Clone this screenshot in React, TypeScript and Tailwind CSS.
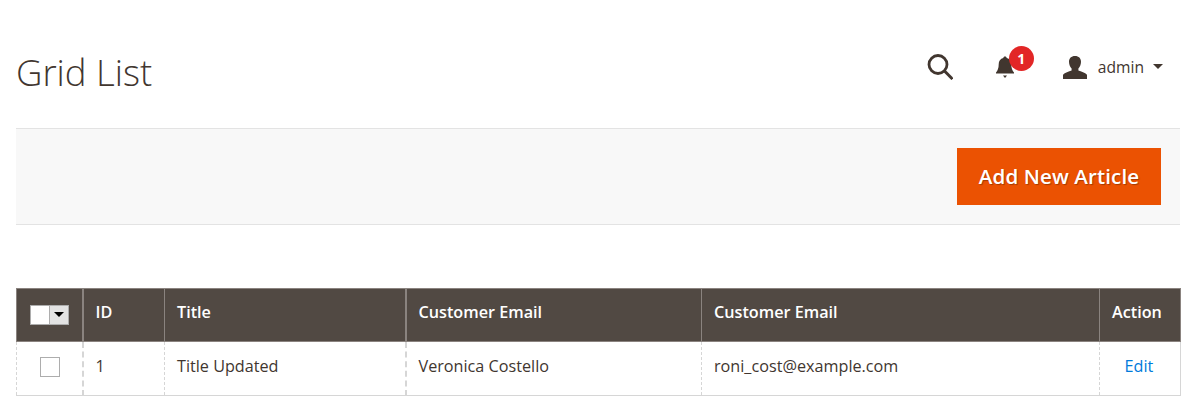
const font = { fontFamily: '"Open Sans", sans-serif' };

function SearchIcon() {
  return (
    <svg width="26" height="26" viewBox="0 0 26 26" fill="none" stroke="#41362f">
      <circle cx="11" cy="10.500" r="9" strokeWidth="2.800" />
      <path d="M17.500 17 L25.500 25" strokeWidth="3" />
    </svg>
  );
}

function BellIcon() {
  return (
    <svg width="20" height="24" viewBox="0 0 20 24" fill="#41362f">
      <path d="M10 1.500c1 0 1.700.7 1.700 1.600 3 .7 4.600 3 4.600 6.200 0 4 1 6.200 2.700 8.200v1H1v-1c1.700-2 2.700-4.200 2.700-8.200 0-3.200 1.600-5.500 4.600-6.200C8.300 2.200 9 1.500 10 1.500z" />
      <path d="M8 20.500h4L10 23z" />
    </svg>
  );
}

function UserIcon() {
  return (
    <svg width="26" height="26" viewBox="0 0 26 26" fill="#41362f">
      <path d="M13 2c3.800 0 6 2.300 6 5.800 0 2.800-1.200 5.400-2.600 6.700v2c2.800 1.300 6.700 1.800 8.600 4.200V25H1v-4.300c1.900-2.400 5.800-2.900 8.600-4.200v-2C8.200 13.200 7 10.600 7 7.800 7 4.300 9.200 2 13 2z" />
    </svg>
  );
}

export default function App() {
  return (
    <div className="w-[1185px] h-[413px] bg-white overflow-hidden text-[#41362f]" style={font}>
      {/* top header */}
      <div className="flex items-center justify-between h-[128px] pl-[16px] pr-[22px] pt-[18px]">
        <h1 className="text-[36.5px] leading-none font-light mt-[-1px]">Grid List</h1>
        <div className="flex items-center mt-[-13px]">
          <SearchIcon />
          <div className="relative ml-[42px] mt-[1px]">
            <BellIcon />
            <span className="absolute left-[14px] top-[-9px] w-[25px] h-[25px] rounded-full bg-[#e22626] text-white text-[14px] font-bold flex items-center justify-center">
              1
            </span>
          </div>
          <div className="ml-[47px]">
            <UserIcon />
          </div>
          <span className="ml-[10px] pt-[2px] text-[15.6px] text-[#41362f]">admin</span>
          <span className="ml-[9px] w-0 h-0 border-x-[5px] border-x-transparent border-t-[5px] border-t-[#41362f]" />
        </div>
      </div>

      {/* action bar */}
      <div className="flex justify-end items-center ml-[16px] mr-[5px] h-[97px] bg-[#f8f8f8] border-y border-[#e3e3e3] pr-[19px]">
        <button className="w-[204px] h-[57px] bg-[#eb5202] text-white text-[20.6px] font-semibold tracking-[0.1px] [text-shadow:1px_1px_1px_rgba(0,0,0,0.3)]">
          Add New Article
        </button>
      </div>

      {/* grid */}
      <table className="mt-[63px] ml-[16px] w-[1164px] table-fixed border-collapse text-[16.2px]">
        <colgroup>
          <col className="w-[66px]" />
          <col className="w-[82px]" />
          <col className="w-[241px]" />
          <col className="w-[296px]" />
          <col className="w-[398px]" />
          <col className="w-[81px]" />
        </colgroup>
        <thead>
          <tr className="h-[53px] bg-[#514943] text-white text-left">
            <th className="border border-[#8a837f] border-r-2 font-semibold">
              <div className="flex justify-center">
                <div className="flex w-[39px] h-[20px] bg-white border border-[#adadad] mt-[-1px]">
                  <div className="w-[18px]" />
                  <div className="flex-1 bg-[#e3e3e3] border-l border-[#adadad] flex items-center justify-center">
                    <span className="w-0 h-0 border-x-[5px] border-x-transparent border-t-[5px] border-t-black" />
                  </div>
                </div>
              </div>
            </th>
            <th className="border border-[#8a837f] px-[12px] pb-[5px] font-semibold">ID</th>
            <th className="border border-[#8a837f] border-r-2 px-[12px] pb-[5px] font-semibold">Title</th>
            <th className="border border-[#8a837f] px-[12px] pb-[5px] font-semibold">Customer Email</th>
            <th className="border border-[#8a837f] px-[12px] pb-[5px] font-semibold">Customer Email</th>
            <th className="border border-[#8a837f] px-[12px] pb-[5px] font-semibold">Action</th>
          </tr>
        </thead>
        <tbody>
          <tr className="h-[54px] border-b border-[#d6d6d6]">
            <td className="border-l border-l-[#d6d6d6] border-r-2 border-r-[#d6d6d6] border-dashed pb-[4px]">
              <div className="flex justify-center">
                <div className="w-[20px] h-[20px] bg-white border border-[#adadad] ml-[1px]" />
              </div>
            </td>
            <td className="border-r border-dashed border-r-[#d6d6d6] px-[12px] pb-[4px]">1</td>
            <td className="border-r-2 border-dashed border-r-[#d6d6d6] px-[12px] pb-[4px]">Title Updated</td>
            <td className="border-r border-dashed border-r-[#d6d6d6] px-[12px] pb-[4px]">Veronica Costello</td>
            <td className="border-r border-dashed border-r-[#d6d6d6] px-[12px] pb-[4px]">roni_cost@example.com</td>
            <td className="border-r border-r-[#d6d6d6] text-center pb-[4px] pr-[2px]">
              <a className="text-[#007bdb]">Edit</a>
            </td>
          </tr>
        </tbody>
      </table>
    </div>
  );
}
